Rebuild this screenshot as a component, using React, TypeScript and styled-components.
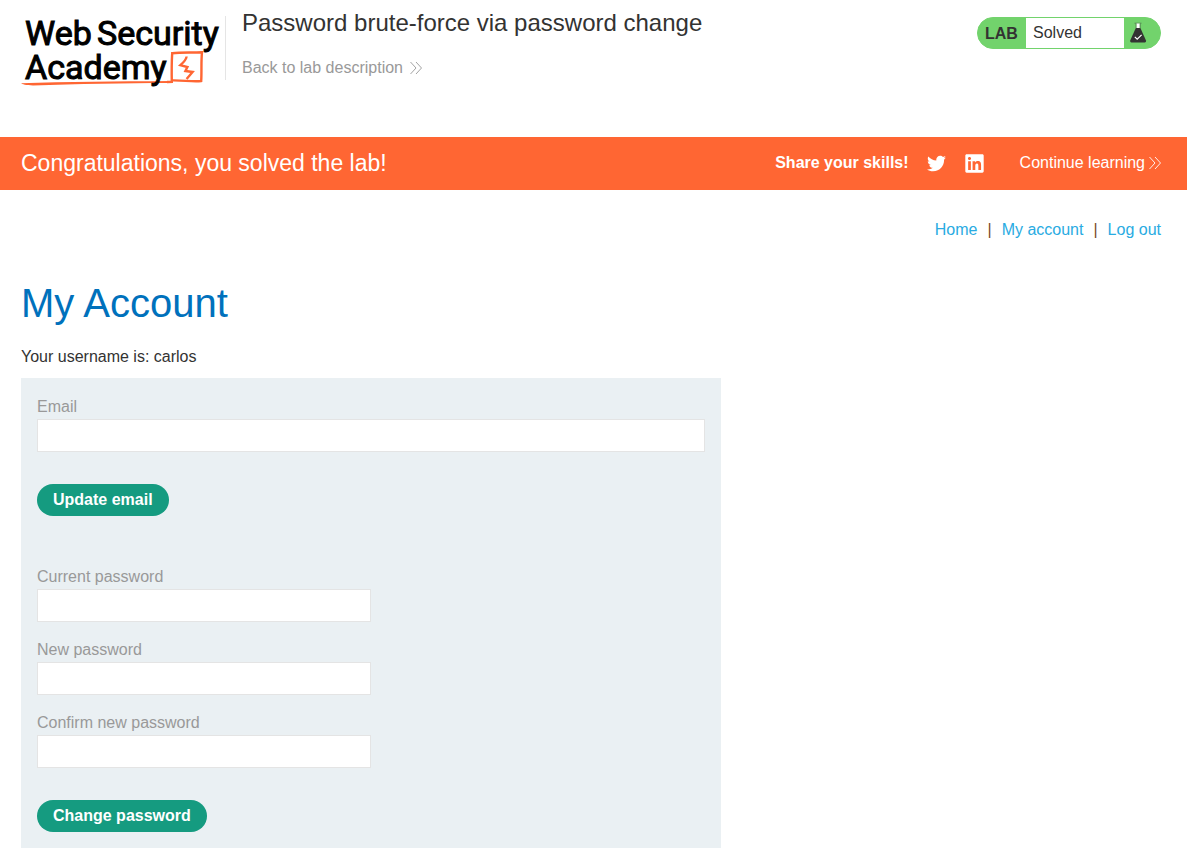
import React from "react";
import styled, { createGlobalStyle } from "styled-components";
import { FaTwitter, FaLinkedin } from "react-icons/fa";

const GlobalStyle = createGlobalStyle`
  *, *::before, *::after { box-sizing: border-box; }
  body {
    margin: 0;
    background: #fff;
    color: #333332;
    font-family: "Liberation Sans", Arial, sans-serif;
    font-size: 16px;
    line-height: 20px;
  }
  a { text-decoration: none; }
`;

const Container = styled.div`
  padding: 0 26px 0 21px;
`;

const Header = styled(Container)`
  display: flex;
  align-items: flex-start;
  min-height: 137px;
`;

const LogoLink = styled.a`
  flex: none;
  margin-top: 13px;
  color: #000;
`;

const LogoSvg = styled.svg`
  display: block;
  width: 204px;
  height: 76px;
  overflow: visible;
`;

const LogoText = styled.text`
  font-family: Roboto, "Liberation Sans", sans-serif;
  font-size: 34px;
  fill: #000;
  stroke: #000;
  stroke-width: 1px;
`;

const TitleBlock = styled.div`
  flex: 1;
  border-left: 1px solid #e5e5e5;
  margin-top: 16px;
  height: 64px;
  padding-left: 16px;
`;

const Title = styled.h2`
  margin: -8px 0 0;
  font-size: 24px;
  line-height: 30px;
  font-weight: 400;
`;

const BackLink = styled.a`
  display: inline-flex;
  align-items: center;
  gap: 7px;
  margin-top: 20px;
  color: #999;
`;

const LabStatus = styled.div`
  display: flex;
  align-items: stretch;
  flex: none;
  width: 184px;
  height: 32px;
  margin-top: 17px;
  border: 1px solid #72d36c;
  border-radius: 16px;
  overflow: hidden;
  background: #72d36c;
`;

const LabTag = styled.span`
  width: 48px;
  padding-left: 7px;
  line-height: 31px;
  font-weight: 700;
`;

const LabState = styled.span`
  flex: 1;
  padding-left: 7px;
  background: #fff;
  line-height: 29px;
`;

const LabIcon = styled.span`
  display: flex;
  align-items: center;
  width: 36px;
  padding-left: 5px;
`;

const Banner = styled.section`
  background: #ff6633;
  color: #fff;
`;

const BannerRow = styled(Container)`
  display: flex;
  align-items: center;
  height: 53px;
  padding-bottom: 2px;
`;

const BannerMessage = styled.h4`
  flex: 1;
  margin: 0;
  font-size: 23px;
  line-height: 30px;
  font-weight: 400;
`;

const Share = styled.div`
  display: flex;
  align-items: center;
  gap: 18px;
  font-weight: 700;
`;

const ShareLink = styled.a<{ $size: number }>`
  display: flex;
  padding-top: 2px;
  color: #fff;
  font-size: ${(p) => p.$size}px;
`;

const ContinueLink = styled.a`
  display: flex;
  align-items: center;
  gap: 4px;
  margin-left: 35px;
  color: #fff;
`;

const Nav = styled.nav`
  display: flex;
  justify-content: flex-end;
  gap: 10px;
  padding-top: 30px;
`;

const NavLink = styled.a`
  color: #29abe2;
`;

const NavDivider = styled.span`
  color: #7a4a1e;
`;

const Heading = styled.h1`
  margin: 38px 0 0;
  color: #0071bc;
  font-size: 40px;
  line-height: 50px;
  font-weight: 400;
`;

const Username = styled.p`
  margin: 19px 0 11px;
`;

const Panel = styled.div`
  max-width: 700px;
  padding: 16px;
  background: #eaf0f3;
`;

const Form = styled.form`
  & + & {
    margin-top: 48px;
  }
`;

const Field = styled.div<{ $half?: boolean }>`
  width: ${(p) => (p.$half ? "50%" : "100%")};
  & + & {
    margin-top: 15px;
  }
`;

const Label = styled.label`
  display: block;
  padding: 2px 0 1px;
  line-height: 22px;
  color: #999;
`;

const Input = styled.input`
  display: block;
  width: 100%;
  height: 33px;
  padding: 0 8px;
  border: 1px solid #e4e4e4;
  border-radius: 0;
  background: #fff;
  color: #333332;
  font: inherit;
`;

const Button = styled.button`
  display: block;
  height: 32px;
  margin-top: 32px;
  padding: 0 16px;
  border: 0;
  border-radius: 16px;
  background: #159b80;
  color: #fff;
  font: inherit;
  font-weight: 700;
`;

function Chevrons() {
  return (
    <svg width="12" height="14" viewBox="0 0 12 14" fill="none" stroke="currentColor" strokeWidth="0.9" aria-hidden="true">
      <path d="M0.5 1 L6 7 L0.5 13 M6 1 L11.5 7 L6 13" />
    </svg>
  );
}

function Flask() {
  return (
    <svg width="18" height="22" viewBox="0 0 18 22" aria-hidden="true">
      <path d="M5.5 1.2 H12.5" stroke="#5b8f58" strokeWidth="1" />
      <path d="M7.4 1.5 H10.8 V6.5 H7.4 Z" fill="#fff" />
      <path d="M7 1.5 V6 M11.2 1.5 V6" stroke="#4b6b49" strokeWidth="0.7" />
      <path d="M6.8 6 H11.4 L17 18.6 Q17.4 20.5 15.8 20.5 H2.4 Q0.8 20.5 1.2 18.6 Z" fill="#333332" />
      <path d="M5.8 14.8 L8.2 17.2 L12.6 12.8" fill="none" stroke="#fff" strokeWidth="1.2" />
    </svg>
  );
}

function Logo() {
  return (
    <LogoSvg viewBox="0 0 204 76" role="img" aria-label="Web Security Academy">
      <LogoText x="4" y="32">Web</LogoText>
      <LogoText x="76" y="32">Security</LogoText>
      <path
        d="M0 70.2 C45 68.8 95 68.4 149 68 L150 70 C105 70.2 55 71 12 72.4 C5 72.2 1 71.2 0 70.2 Z"
        fill="#ff6633"
      />
      <path
        d="M146 69 L150.8 68.8 C150.6 59 150.6 50 151.2 40.2 C161 39.2 171 39.8 181 39.2 C180 49 180.8 58 180.2 68 C171 68.8 162 67.2 151 67.4"
        fill="none"
        stroke="#ff6633"
        strokeWidth="2.4"
      />
      <path
        d="M165.6 43.5 C165.4 46 164 48 159.4 52.2 L166.4 54 L164.4 58 L171.6 59 L165.6 66"
        fill="none"
        stroke="#ff6633"
        strokeWidth="2.4"
      />
      <LogoText x="4" y="66">Academy</LogoText>
    </LogoSvg>
  );
}

function PasswordField({ id, label }: { id: string; label: string }) {
  return (
    <Field $half>
      <Label htmlFor={id}>{label}</Label>
      <Input id={id} name={id} type="password" />
    </Field>
  );
}

export default function App() {
  return (
    <>
      <GlobalStyle />
      <Header as="header">
        <LogoLink href="#academy">
          <Logo />
        </LogoLink>
        <TitleBlock>
          <Title>Password brute-force via password change</Title>
          <BackLink href="#description">
            Back to lab description <Chevrons />
          </BackLink>
        </TitleBlock>
        <LabStatus>
          <LabTag>LAB</LabTag>
          <LabState>Solved</LabState>
          <LabIcon>
            <Flask />
          </LabIcon>
        </LabStatus>
      </Header>
      <Banner>
        <BannerRow>
          <BannerMessage>Congratulations, you solved the lab!</BannerMessage>
          <Share>
            Share your skills!
            <ShareLink $size={19} href="#twitter" aria-label="Share on Twitter">
              <FaTwitter />
            </ShareLink>
            <ShareLink $size={21} href="#linkedin" aria-label="Share on LinkedIn">
              <FaLinkedin />
            </ShareLink>
          </Share>
          <ContinueLink href="#learning">
            Continue learning <Chevrons />
          </ContinueLink>
        </BannerRow>
      </Banner>
      <Container as="main">
        <Nav>
          <NavLink href="#home">Home</NavLink>
          <NavDivider>|</NavDivider>
          <NavLink href="#account">My account</NavLink>
          <NavDivider>|</NavDivider>
          <NavLink href="#logout">Log out</NavLink>
        </Nav>
        <Heading>My Account</Heading>
        <Username>Your username is: carlos</Username>
        <Panel>
          <Form>
            <Field>
              <Label htmlFor="email">Email</Label>
              <Input id="email" name="email" type="email" />
            </Field>
            <Button type="submit">Update email</Button>
          </Form>
          <Form>
            <PasswordField id="current-password" label="Current password" />
            <PasswordField id="new-password-1" label="New password" />
            <PasswordField id="new-password-2" label="Confirm new password" />
            <Button type="submit">Change password</Button>
          </Form>
        </Panel>
      </Container>
    </>
  );
}
